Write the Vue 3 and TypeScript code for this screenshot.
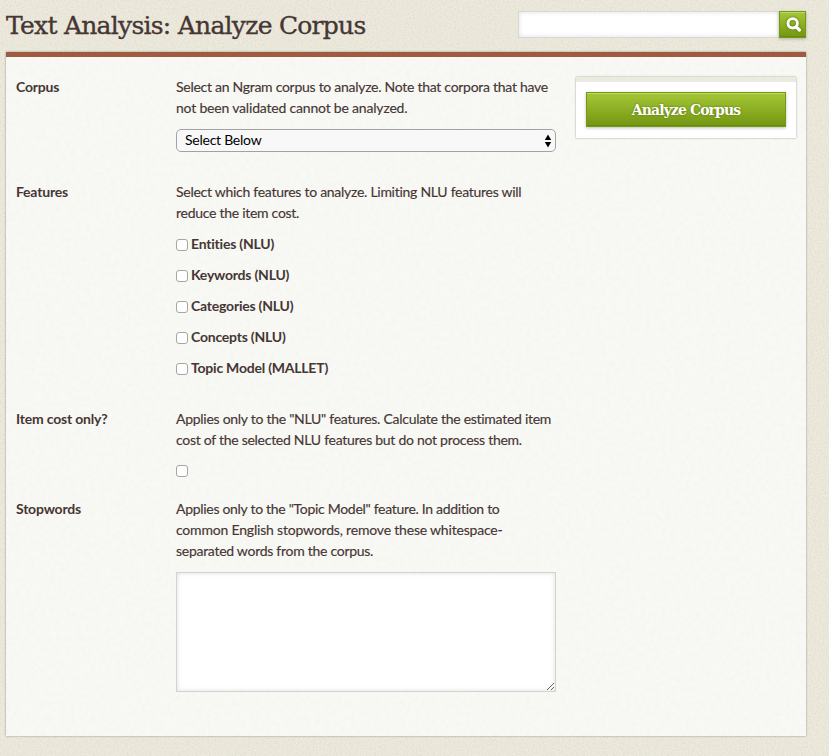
<script setup lang="ts">
import { ref } from 'vue'

interface Feature { id: string; label: string }

const features: Feature[] = [
  { id: 'entities', label: 'Entities (NLU)' },
  { id: 'keywords', label: 'Keywords (NLU)' },
  { id: 'categories', label: 'Categories (NLU)' },
  { id: 'concepts', label: 'Concepts (NLU)' },
  { id: 'topic-model', label: 'Topic Model (MALLET)' },
]
const selected = ref<string[]>([])
const costOnly = ref(false)
const stopwords = ref('')
const query = ref('')
</script>

<template>
  <div class="page">
    <svg class="grain" aria-hidden="true">
      <filter id="grain-page">
        <feTurbulence type="fractalNoise" baseFrequency="0.6" numOctaves="2" seed="4" />
        <feColorMatrix values="0 0 0 0 0.55  0 0 0 0 0.52  0 0 0 0 0.38  0.55 0 0 0 -0.22" />
      </filter>
      <rect width="100%" height="100%" filter="url(#grain-page)" />
    </svg>
    <header class="top">
      <h1>Text Analysis: Analyze Corpus</h1>
      <form class="search" @submit.prevent>
        <input v-model="query" type="text" class="query" />
        <button class="go" type="submit">
          <svg viewBox="0 0 16 16" width="16" height="16">
            <circle cx="6.7" cy="6.3" r="4.7" fill="none" stroke="#fff" stroke-width="2.9" />
            <path d="M10.2 9.8 L13.4 13" stroke="#fff" stroke-width="3.2" stroke-linecap="round" />
          </svg>
        </button>
      </form>
    </header>
    <main class="panel">
      <svg class="grain" aria-hidden="true">
        <filter id="grain-panel">
          <feTurbulence type="fractalNoise" baseFrequency="0.2" numOctaves="2" seed="9" />
          <feColorMatrix values="0 0 0 0 0.6  0 0 0 0 0.6  0 0 0 0 0.52  0.13 0 0 0 -0.05" />
        </filter>
        <rect width="100%" height="100%" filter="url(#grain-panel)" />
      </svg>
      <form class="fields" @submit.prevent>
        <section class="field corpus">
          <h2>Corpus</h2>
          <div class="inputs">
            <p>
              <span>Select an Ngram corpus to analyze. Note that corpora that have</span>
              <span class="loose">not been validated cannot be analyzed.</span>
            </p>
            <button type="button" class="select">
              <span>Select Below</span>
              <svg viewBox="0 0 8 14" width="8" height="14"><path d="M4 0.5 L7.2 6 H0.8Z M0.8 8 H7.2 L4 13.5Z" /></svg>
            </button>
          </div>
        </section>
        <section class="field features">
          <h2>Features</h2>
          <div class="inputs">
            <p>
              <span>Select which features to analyze. Limiting NLU features will</span>
              <span>reduce the item cost.</span>
            </p>
            <label v-for="f in features" :key="f.id" class="option">
              <input v-model="selected" type="checkbox" :value="f.id" />
              <b>{{ f.label }}</b>
            </label>
          </div>
        </section>
        <section class="field cost">
          <h2>Item cost only?</h2>
          <div class="inputs">
            <p>
              <span>Applies only to the "NLU" features. Calculate the estimated item</span>
              <span>cost of the selected NLU features but do not process them.</span>
            </p>
            <label class="option single"><input v-model="costOnly" type="checkbox" /></label>
          </div>
        </section>
        <section class="field">
          <h2>Stopwords</h2>
          <div class="inputs">
            <p class="stop-help">
              <span class="tight">Applies only to the "Topic Model" feature. In addition to</span>
              <span class="loose">common English stopwords, remove these whitespace-</span>
              <span>separated words from the corpus.</span>
            </p>
            <textarea v-model="stopwords"></textarea>
          </div>
        </section>
      </form>
      <aside class="actions">
        <button type="button" class="primary">Analyze Corpus</button>
      </aside>
    </main>
  </div>
</template>

<style>
body { margin: 0; background: #e9e7da; }
</style>

<style scoped>
* { box-sizing: border-box; }
.page {
  position: relative;
  width: 829px;
  height: 756px;
  padding: 0 23px 0 6px;
  overflow: hidden;
  background: #ece9dd;
  color: #453634;
  font: 14px/21px Lato, "Liberation Sans", sans-serif;
}
.grain { position: absolute; inset: 0; width: 100%; height: 100%; pointer-events: none; }
.top { position: relative; display: flex; justify-content: space-between; height: 52px; }
h1 {
  margin: 8px 0 0;
  font: 400 25px/36px "DejaVu Serif", serif;
  letter-spacing: -0.74px;
  -webkit-text-stroke: 0.35px currentColor;
  white-space: nowrap;
}
.search { display: flex; width: 288px; height: 27px; margin-top: 11px; }
.query {
  flex: 1;
  min-width: 0;
  border: 1px solid #d8d8d6;
  border-right: 0;
  border-radius: 0;
  background: #fff;
  box-shadow: inset 0 0 5px rgba(0, 0, 0, 0.13);
  outline: 0;
}
.go, .primary {
  border: 1px solid #749810;
  background: linear-gradient(#a5c736, #739612);
  box-shadow: inset 0 1px #bed76a, inset 0 -1px #698a0e, 0 1px 3px rgba(0, 0, 0, 0.25);
}
.go { display: flex; align-items: center; justify-content: center; width: 27px; padding: 0; }
.go svg { margin: 1px 0 0 2px; filter: drop-shadow(0 0 1px #4d6900); }
.panel {
  position: relative;
  display: flex;
  justify-content: space-between;
  align-items: flex-start;
  height: 684px;
  padding: 19px 10px 0;
  border-top: 5px solid #9d5b41;
  background: #f8f8f4;
  box-shadow: 0 0 2px rgba(0, 0, 0, 0.38);
}
.fields { position: relative; width: 540px; }
.field { display: flex; }
.corpus { height: 105px; }
.features { height: 227px; }
.cost { height: 90px; }
h2 { width: 160px; margin: 0; font-size: 14px; line-height: 21px; font-weight: 700; letter-spacing: -0.2px; white-space: nowrap; }
.inputs { width: 380px; }
p { margin: 0 0 10px; letter-spacing: -0.275px; -webkit-text-stroke: 0.15px currentColor; }
p span { display: block; width: max-content; white-space: nowrap; }
.loose { letter-spacing: -0.19px; }
.tight { letter-spacing: -0.3px; }
.stop-help { margin-bottom: 11px; }
.select {
  display: flex;
  align-items: center;
  justify-content: space-between;
  width: 380px;
  height: 23px;
  margin-top: 11px;
  padding: 0 3px 0 8px;
  border: 1px solid #a2a2a2;
  border-radius: 5px;
  background: #f8f8f8;
  color: #000;
  font: 14px/19px Lato, sans-serif;
  letter-spacing: -0.25px;
}
.select span { height: 21px; }
.option { display: flex; align-items: center; gap: 3px; height: 21px; margin-bottom: 10px; letter-spacing: -0.22px; }
.option input {
  appearance: none;
  width: 12px;
  height: 12px;
  margin: 2px 0 0;
  border: 1px solid #a5a5a5;
  border-radius: 3px;
  background: #fff;
}
.single input { margin-top: 0; }
textarea {
  display: block;
  width: 380px;
  height: 120px;
  margin: 0;
  border: 1px solid #d2d2d0;
  border-radius: 0;
  background: #fff;
  box-shadow: inset 0 0 5px rgba(0, 0, 0, 0.13);
  outline: 0;
}
.actions {
  position: relative;
  width: 220px;
  height: 61px;
  margin-top: 1px;
  padding: 10px;
  border-top: 5px solid #ebeade;
  background: #fff;
  box-shadow: 0 0 2px rgba(0, 0, 0, 0.35);
}
.primary {
  display: block;
  width: 200px;
  height: 35px;
  padding: 0;
  color: #fff;
  font: 700 14px/32px "DejaVu Serif", serif;
  letter-spacing: -0.9px;
  text-shadow: 0 0 2px #4d6900;
}
</style>
